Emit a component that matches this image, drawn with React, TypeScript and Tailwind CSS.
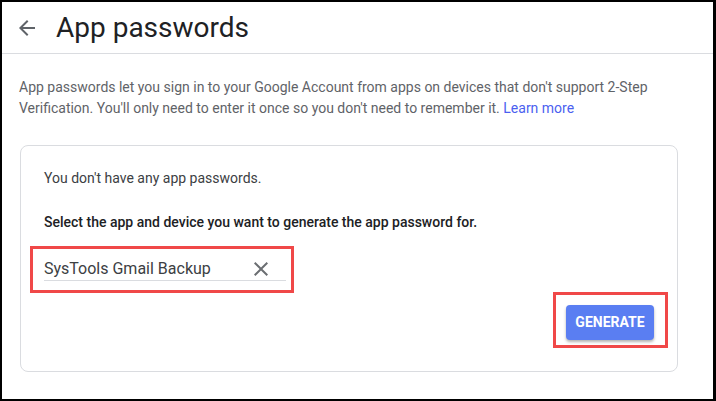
import React from "react";

const ArrowBack = () => (
  <svg width="24" height="24" viewBox="0 0 24 24" className="fill-[#5f6368]">
    <path d="M20 11H7.83l5.59-5.59L12 4l-8 8 8 8 1.41-1.41L7.83 13H20v-2z" />
  </svg>
);

const CloseIcon = () => (
  <svg width="24" height="24" viewBox="0 0 24 24" className="fill-[#6b6e72]">
    <path d="M19 6.41L17.59 5 12 10.59 6.41 5 5 6.41 10.59 12 5 17.59 6.41 19 12 13.41 17.59 19 19 17.59 13.41 12z" />
  </svg>
);

const App = () => {
  return (
    <div className="h-[401px] w-[716px] overflow-hidden border-b-2 border-l-2 border-r-[3px] border-t-2 border-black bg-white font-['Roboto',sans-serif]">
      <header className="flex h-[52px] items-center border-b border-[#dadce0] pl-[13px]">
        <ArrowBack />
        <h1 className="ml-[17px] text-[28px] leading-none text-[#202124]">App passwords</h1>
      </header>

      <div className="mt-[23px] pl-[17px] pr-[60px] text-[14px] leading-[21px] text-[#5f6368]">
        <p>App passwords let you sign in to your Google Account from apps on devices that don't support 2-Step</p>
        <p>
          Verification. You'll only need to enter it once so you don't need to remember it.{" "}
          <span className="text-[#4b5ff0]">Learn more</span>
        </p>
      </div>

      <div className="ml-[18px] mr-[35px] mt-[26px] flex flex-col rounded-lg border border-[#dadce0] px-[23px] pb-[23px] pt-[22px]">
        <div className="text-[14px] leading-[20px] text-[#3c4043]">You don't have any app passwords.</div>
        <div className="mt-[24px] text-[14px] font-medium leading-[20px] text-[#202124]">
          Select the app and device you want to generate the app password for.
        </div>

        <div className="-ml-[14px] mt-[14px] w-[264px] border-[3px] border-[#f04848] pb-[9px] pl-[11px] pr-[5px] pt-[8px]">
          <div className="flex h-[24px] w-[242px] items-center justify-between border-b border-[#dadce0] pr-[13px]">
            <span className="text-[16px] leading-[20px] text-[#3c4043]">SysTools Gmail Backup</span>
            <CloseIcon />
          </div>
        </div>

        <div className="-mr-[14px] -mt-[1px] flex justify-end">
          <div className="border-[3px] border-[#f04848] pb-[5px] pl-[10px] pr-[11px] pt-[10px]">
            <button className="flex h-[35px] w-[88px] items-center justify-center rounded-[4px] bg-[#5a7ef2] text-[14px] font-bold text-white shadow-[0_2px_3px_rgba(0,0,0,0.3)]">
              GENERATE
            </button>
          </div>
        </div>
      </div>
    </div>
  );
};

export default App;
